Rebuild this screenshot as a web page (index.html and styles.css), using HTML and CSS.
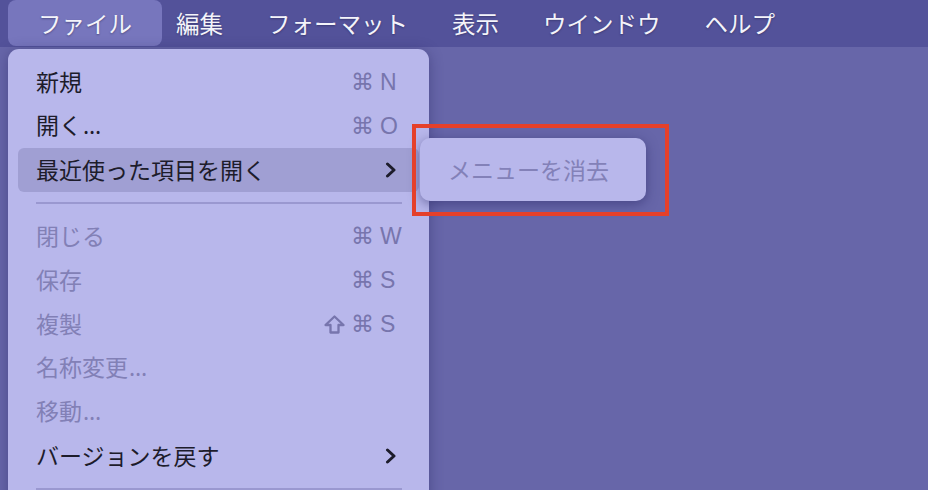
FILE: index.html
```html
<!DOCTYPE html>
<html lang="ja">
<head>
<meta charset="utf-8">
<title>ファイル メニュー</title>
<link rel="stylesheet" href="styles.css">
</head>
<body>
<div class="screen">
  <nav class="menubar">
    <span class="mb-item active">ファイル</span>
    <span class="mb-item">編集</span>
    <span class="mb-item">フォーマット</span>
    <span class="mb-item">表示</span>
    <span class="mb-item">ウインドウ</span>
    <span class="mb-item">ヘルプ</span>
  </nav>
  <div class="desk">
    <div class="menu">
      <div class="row"><span class="label">新規</span><span class="sc"><span class="mod">⌘</span><span class="key">N</span></span></div>
      <div class="row"><span class="label">開く<span class="ell">…</span></span><span class="sc"><span class="mod">⌘</span><span class="key">O</span></span></div>
      <div class="row hl"><span class="label">最近使った項目を開く</span><svg class="chev" width="12" height="16" viewBox="0 0 12 16"><path d="M2.5 2 L9 8 L2.5 14" fill="none" stroke="#1d1c2b" stroke-width="3" stroke-linecap="round" stroke-linejoin="round"/></svg></div>
      <div class="sep"></div>
      <div class="row dis"><span class="label">閉じる</span><span class="sc"><span class="mod">⌘</span><span class="key">W</span></span></div>
      <div class="row dis"><span class="label">保存</span><span class="sc"><span class="mod">⌘</span><span class="key">S</span></span></div>
      <div class="row dis"><span class="label">複製</span><span class="sc"><svg class="shift" width="21" height="19" viewBox="0 0 21 19"><path d="M10.5 1.5 L19.5 10 L14.5 10 L14.5 17.5 L6.5 17.5 L6.5 10 L1.5 10 Z" fill="none" stroke="#7775ad" stroke-width="2.3" stroke-linejoin="round"/></svg><span class="mod">⌘</span><span class="key">S</span></span></div>
      <div class="row dis"><span class="label">名称変更<span class="ell">…</span></span></div>
      <div class="row dis"><span class="label">移動<span class="ell">…</span></span></div>
      <div class="row"><span class="label">バージョンを戻す</span><svg class="chev" width="12" height="16" viewBox="0 0 12 16"><path d="M2.5 2 L9 8 L2.5 14" fill="none" stroke="#1d1c2b" stroke-width="3" stroke-linecap="round" stroke-linejoin="round"/></svg></div>
      <div class="sep"></div>
    </div>
    <div class="submenu"><span class="sub-label">メニューを消去</span></div>
    <div class="callout"></div>
  </div>
</div>
</body>
</html>
```
FILE: styles.css
```css
html, body {
  margin: 0;
  padding: 0;
}
body {
  width: 928px;
  height: 490px;
  overflow: hidden;
  background: #6766a9;
  font-family: "Noto Sans CJK JP", "Noto Sans", sans-serif;
}
.screen {
  width: 928px;
  height: 490px;
  overflow: hidden;
  display: flex;
  flex-direction: column;
}
.menubar {
  height: 47px;
  flex: none;
  background: #53529a;
  display: flex;
  align-items: flex-start;
  padding-left: 8px;
}
.mb-item {
  height: 46px;
  display: flex;
  align-items: center;
  font-size: 23.5px;
  color: #f4f4fa;
  text-shadow: 0 1px 2px rgba(30, 30, 70, 0.45);
  white-space: nowrap;
}
.mb-item + .mb-item {
  margin-left: 44px;
}
.mb-item.active {
  padding: 0 30px 0 30px;
  background: #7776bd;
  border-radius: 8px;
}
.mb-item.active + .mb-item {
  margin-left: 14px;
}
.desk {
  position: relative;
  flex: 1;
}
.menu {
  margin: 2px 0 0 8px;
  width: 401px;
  padding: 11px 10px 20px;
  background: #b8b7eb;
  border-radius: 11px;
  box-shadow: 0 2px 14px rgba(40, 38, 100, 0.45);
}
.row {
  height: 44px;
  display: flex;
  align-items: center;
  justify-content: space-between;
  padding: 0 17px 0 18px;
  border-radius: 6px;
  font-size: 23px;
  color: #1d1c2b;
  white-space: nowrap;
}
.row.hl {
  background: #a09fd3;
}
.row.dis {
  color: #8280b6;
}
.label {
  line-height: 1;
  margin-top: -2px;
}
.ell {
  font-family: "Noto Sans", "Liberation Sans", sans-serif;
  margin-left: 1px;
}
.sc {
  display: flex;
  align-items: center;
  color: #7775ad;
  font-size: 23px;
  line-height: 1;
}
.shift {
  display: block;
  margin-right: 6px;
}
.mod {
  font-family: "DejaVu Sans", sans-serif;
  font-size: 23px;
  margin-right: 6px;
}
.key {
  width: 22px;
  font-family: "Liberation Sans", "Noto Sans", sans-serif;
  font-size: 23px;
}
.chev {
  margin-right: 5px;
  display: block;
}
.sep {
  height: 2px;
  margin: 10px 17px 10px 18px;
  background: #9a98d0;
}
.submenu {
  position: absolute;
  left: 420px;
  top: 91px;
  width: 226px;
  height: 63px;
  box-sizing: border-box;
  background: #b8b7eb;
  border-radius: 10px;
  box-shadow: 0 3px 12px rgba(40, 38, 100, 0.5);
  display: flex;
  align-items: center;
  padding-left: 28px;
}
.sub-label {
  font-size: 23px;
  color: #8381b8;
  white-space: nowrap;
  margin-top: -2px;
}
.callout {
  position: absolute;
  left: 412px;
  top: 77px;
  width: 257px;
  height: 92px;
  box-sizing: border-box;
  border: 4px solid #e5402a;
}
```
